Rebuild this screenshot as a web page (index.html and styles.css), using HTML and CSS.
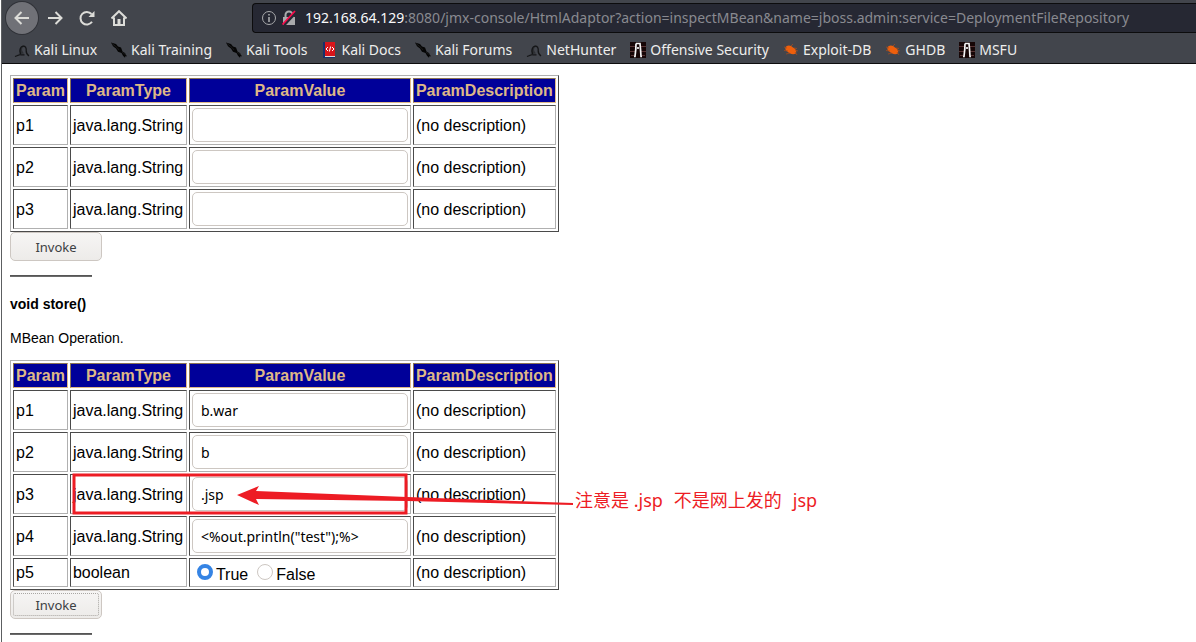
FILE: index.html
```html
<!DOCTYPE html>
<html lang="en">
<head>
<meta charset="utf-8">
<title>MBean Inspector</title>
<link rel="stylesheet" href="styles.css">
</head>
<body>
<svg class="defs" aria-hidden="true">
  <symbol id="dragon" viewBox="0 0 16 16">
    <path d="M2.500 12.500 6 11.500C5 9 5.500 6 7.500 4.200 9.500 3 12 3.500 12.500 5.500L11 5.300C9.500 4.500 8 5.500 8 7.500 8 9 9 10 10 11.500" fill="#2d2f33"/>
    <path d="M1 14.500 6.500 12.500M6.500 12C5 8 6.500 4.500 9 4.200 11.500 4 12.500 6.500 12.200 8.500 12 11 13 12.500 15 14M6.500 12.800H10.500" fill="none" stroke="#141517" stroke-width="1.300"/>
  </symbol>
  <symbol id="blade" viewBox="0 0 16 16">
    <path d="M0 0.500 5 2 7 4.500 10 5.500 11.500 9.500 14 11 16 14.500 14.500 14 14 15.800 12 13.800 10.500 11 7 9.700 5 6.500 2 4.200Z" fill="#050505"/>
    <path d="M1 1.500 6 5.500 8 8M11 10 15 13" stroke="#26282a" stroke-width="0.600" fill="none"/>
  </symbol>
  <symbol id="book" viewBox="0 0 16 16">
    <path d="M2 0H4V14H14V16H2Z" fill="#17306b"/><path d="M4 14H14V15H4Z" fill="#ddd"/><path d="M4 0H14V14H4Z" fill="#d8151b"/>
    <path d="M7 5 5 7 7 9M11 5 13 7 11 9M9.600 4.500 8.400 9.500" fill="none" stroke="#fff"/>
  </symbol>
  <symbol id="offsec" viewBox="0 0 16 16">
    <path d="M0 0H16V16H0Z" fill="#160606"/><path d="M0 4.500H5M11 4.500H16M0 9.500H5M11 9.500H16M1 13.500H4M12 13.500H15" stroke="#573333"/>
    <path d="M6 1.500H10L10.500 7 11 14.500H12M6 1.500 5.800 7 5 14.500H4M8 5V7" fill="none" stroke="#f4f4f4" stroke-width="1.700"/>
  </symbol>
  <symbol id="bug" viewBox="0 0 16 16">
    <path d="M3 4.500C6 2.800 8 3.800 10 5.500 12.500 6.500 14 9 13 11.500 10 12.800 7 12 5 10 3 9 1.500 7 3 4.500Z" fill="#ee5f0c"/>
    <path d="M4 6 1 5M5 9 1 8.500M7 11 3 12M8 4 10 2M11 6 14 6.500M12 8 15 9M12 10 14 13" stroke="#a34c20" stroke-width="0.800"/>
  </symbol>
</svg>

<header class="chrome">
  <div class="toolbar">
    <nav class="nav">
      <button class="nav-btn back" aria-label="Back"><svg viewBox="0 0 16 16"><path d="M15 8H1.500M7.500 2 1.500 8 7.500 14"/></svg></button>
      <button class="nav-btn" aria-label="Forward"><svg viewBox="0 0 16 16"><path d="M1 8H14.500M8.500 2 14.500 8 8.500 14"/></svg></button>
      <button class="nav-btn" aria-label="Reload"><svg viewBox="0 0 16 16"><path d="M13 11.800A6.300 6.300 0 1 1 12.500 4"/><path class="solid" d="M15.500 1V7H9.500Z"/></svg></button>
      <button class="nav-btn" aria-label="Home"><svg viewBox="0 0 16 16"><path d="M0.500 8.500 8 1.200 15.500 8.500M3 7.500V15H13V7.500"/><path class="solid" d="M6.500 9H9.500V14H6.500Z"/></svg></button>
    </nav>
    <div class="address">
      <svg class="address-icon info" viewBox="0 0 16 16"><circle cx="8" cy="8" r="6.500"/><path d="M8 7V12M8 4V5.500" stroke-width="1.600"/></svg>
      <svg class="address-icon lock" viewBox="0 0 16 16"><path d="M4.500 8V5A3.500 3.500 0 0 1 11.500 5V8" fill="none" stroke="#a9aaac" stroke-width="2"/><path d="M2 7H14V15H2Z" fill="#a9aaac"/><path d="M3 15 15 2" stroke="#262833" stroke-width="3"/><path d="M1.500 14.500 14 1" stroke="#fa0a4a" stroke-width="1.800"/></svg>
      <div class="url" role="textbox" aria-label="Address" contenteditable="true" spellcheck="false"><span class="host">192.168.64.129</span>:8080/jmx-console/HtmlAdaptor?action=inspectMBean&amp;name=jboss.admin:service=DeploymentFileRepository</div>
    </div>
  </div>
  <nav class="bookmarks">
    <a href="#"><svg><use href="#dragon"/></svg>Kali Linux</a>
    <a href="#"><svg><use href="#blade"/></svg>Kali Training</a>
    <a href="#"><svg><use href="#blade"/></svg>Kali Tools</a>
    <a href="#"><svg><use href="#book"/></svg>Kali Docs</a>
    <a href="#"><svg><use href="#blade"/></svg>Kali Forums</a>
    <a href="#"><svg><use href="#dragon"/></svg>NetHunter</a>
    <a href="#"><svg><use href="#offsec"/></svg>Offensive Security</a>
    <a href="#"><svg><use href="#bug"/></svg>Exploit-DB</a>
    <a href="#"><svg><use href="#bug"/></svg>GHDB</a>
    <a href="#"><svg><use href="#offsec"/></svg>MSFU</a>
  </nav>
</header>

<main class="page">
  <form>
    <table class="params">
      <tr><th>Param</th><th class="type">ParamType</th><th>ParamValue</th><th>ParamDescription</th></tr>
      <tr><td>p1</td><td>java.lang.String</td><td><input class="field" type="text" aria-label="p1"></td><td>(no description)</td></tr>
      <tr><td>p2</td><td>java.lang.String</td><td><input class="field" type="text" aria-label="p2"></td><td>(no description)</td></tr>
      <tr><td>p3</td><td>java.lang.String</td><td><input class="field" type="text" aria-label="p3"></td><td>(no description)</td></tr>
    </table>
    <button class="invoke" type="button">Invoke</button>
  </form>
  <hr class="rule">
  <h4 class="operation">void store()</h4>
  <p class="summary">MBean Operation.</p>
  <form class="annotated">
    <table class="params">
      <tr><th>Param</th><th class="type">ParamType</th><th>ParamValue</th><th>ParamDescription</th></tr>
      <tr><td>p1</td><td>java.lang.String</td><td><input class="field" type="text" aria-label="p1" value="b.war"></td><td>(no description)</td></tr>
      <tr><td>p2</td><td>java.lang.String</td><td><input class="field" type="text" aria-label="p2" value="b"></td><td>(no description)</td></tr>
      <tr><td>p3</td><td>java.lang.String</td><td><input class="field" type="text" aria-label="p3" value=".jsp"></td><td>(no description)</td></tr>
      <tr><td>p4</td><td>java.lang.String</td><td><input class="field" type="text" aria-label="p4" value="&lt;%out.println(&quot;test&quot;);%&gt;"></td><td>(no description)</td></tr>
      <tr><td>p5</td><td>boolean</td><td><div class="choices"><label><input type="radio" name="p5" checked>True</label><label><input type="radio" name="p5">False</label></div></td><td>(no description)</td></tr>
    </table>
    <button class="invoke focused" type="button">Invoke</button>
    <svg class="marks" width="570" height="50" viewBox="0 0 570 50" aria-hidden="true">
      <rect x="64" y="5" width="332" height="38" fill="none" stroke="#ed1c24" stroke-width="3"/>
      <path d="M227 25 249 16 246 21 397 27 563 33V35L397 31 246 29 249 35Z" fill="#ed1c24"/>
    </svg>
    <p class="note" lang="zh"><span>注意是 .jsp</span><span>不是网上发的</span><span>jsp</span></p>
  </form>
  <hr class="rule">
</main>
</body>
</html>
```
FILE: styles.css
```css
* { box-sizing: border-box; }
html { background: #fff; }
body {
  margin: 0 0 0 1px;
  min-height: 100vh;
  border-left: 1px solid #5c5e61;
  overflow: hidden;
  background: #fff;
  color: #000;
  font-family: "Liberation Sans", Arial, sans-serif;
}
.defs { position: absolute; width: 0; height: 0; }

.chrome {
  height: 64px;
  background: #42454c;
  border-bottom: 1px solid #0c0c0d;
  font: 14px/20px "Noto Sans", sans-serif;
}
.toolbar { display: flex; height: 36px; gap: 117px; }
.nav { display: flex; align-items: center; padding-left: 4px; }
.nav-btn {
  display: flex; align-items: center; justify-content: center;
  width: 32px; height: 32px; padding: 0;
  border: 0; border-radius: 50%; background: none;
}
.nav-btn svg { width: 16px; height: 16px; fill: none; stroke: #dcdcd8; stroke-width: 2; }
.nav-btn .solid { fill: #dcdcd8; stroke: none; }
.back { background: #707177; box-shadow: 0 0 0 1px #303238; margin-right: 1px; }
.address {
  display: flex; align-items: center; flex: 1; min-width: 0;
  height: 30px; margin-top: 3px; padding-left: 8px; gap: 4px;
  border: 1px solid #0c0c0d; border-right: 0; border-radius: 4px 0 0 4px;
  background: #262833;
}
.address-icon { width: 16px; height: 16px; flex: none; }
.info { fill: none; stroke: #a9aaac; }
.url { margin-left: 4px; color: #898a90; white-space: nowrap; outline: 0; }
.host { color: #f9f9fa; }

.bookmarks { display: flex; gap: 14px; padding: 4px 0 0 12px; }
.bookmarks a { display: flex; align-items: center; gap: 4px; color: #eeeeec; text-decoration: none; white-space: nowrap; }
.bookmarks svg { width: 16px; height: 16px; flex: none; }

.page { padding: 11px 8px 0; }
.params {
  border: 1px solid; border-color: #b0b0b0 #4a4a4a #4a4a4a #b0b0b0;
  border-spacing: 2px; font-size: 16px; line-height: 19px;
}
.params th, .params td { padding: 2px; border: 1px solid; white-space: nowrap; }
.params th { background: #009; color: #deb887; border-color: #8b7355 #deb887 #deb887 #8b7355; }
.params td { border-color: #4a4a4a #b0b0b0 #b0b0b0 #4a4a4a; }
.params .type { min-width: 117px; }
.field {
  display: block; width: 216px; height: 34px; padding: 2px 8px;
  border: 1px solid #cdc7c2; border-radius: 5px;
  background: #fff; color: #000; font: 14px "Noto Sans", sans-serif;
}
.choices { display: flex; gap: 9px; height: 23px; padding-left: 5px; }
.choices label { display: flex; gap: 3px; line-height: 27px; }
.choices input {
  appearance: none; width: 16px; height: 16px; margin: 3px 0 0;
  border: 1px solid #cdc7c2; border-radius: 50%; background: #fff;
}
.choices input:checked { border: 4px solid #3584e4; }
.invoke {
  display: block; width: 92px; height: 29px; padding: 0;
  border: 1px solid #cdc7c2; border-radius: 5px;
  background: linear-gradient(#f6f5f4, #edebe9);
  color: #3c4043; font: 13px "Noto Sans", sans-serif;
}
.focused { outline: 1px dotted #a9a6a2; outline-offset: -4px; }
.rule { width: 82px; height: 2px; margin: 14px 0 0; border: 0; background: #6b6b6b; border-top: 1px solid #555; }
.operation { margin: 19px 0 0; font-size: 14px; line-height: 16px; }
.summary { margin: 18px 0 14px; font-size: 14px; line-height: 16px; }

.annotated { position: relative; }
.marks { position: absolute; left: 0; top: 110px; }
.note {
  position: absolute; left: 565px; top: 128px; margin: 0;
  display: flex; gap: 11px; color: #ed1c24; white-space: nowrap;
  font: 18px/24px "Noto Sans", "Noto Sans CJK SC", sans-serif;
}
```
